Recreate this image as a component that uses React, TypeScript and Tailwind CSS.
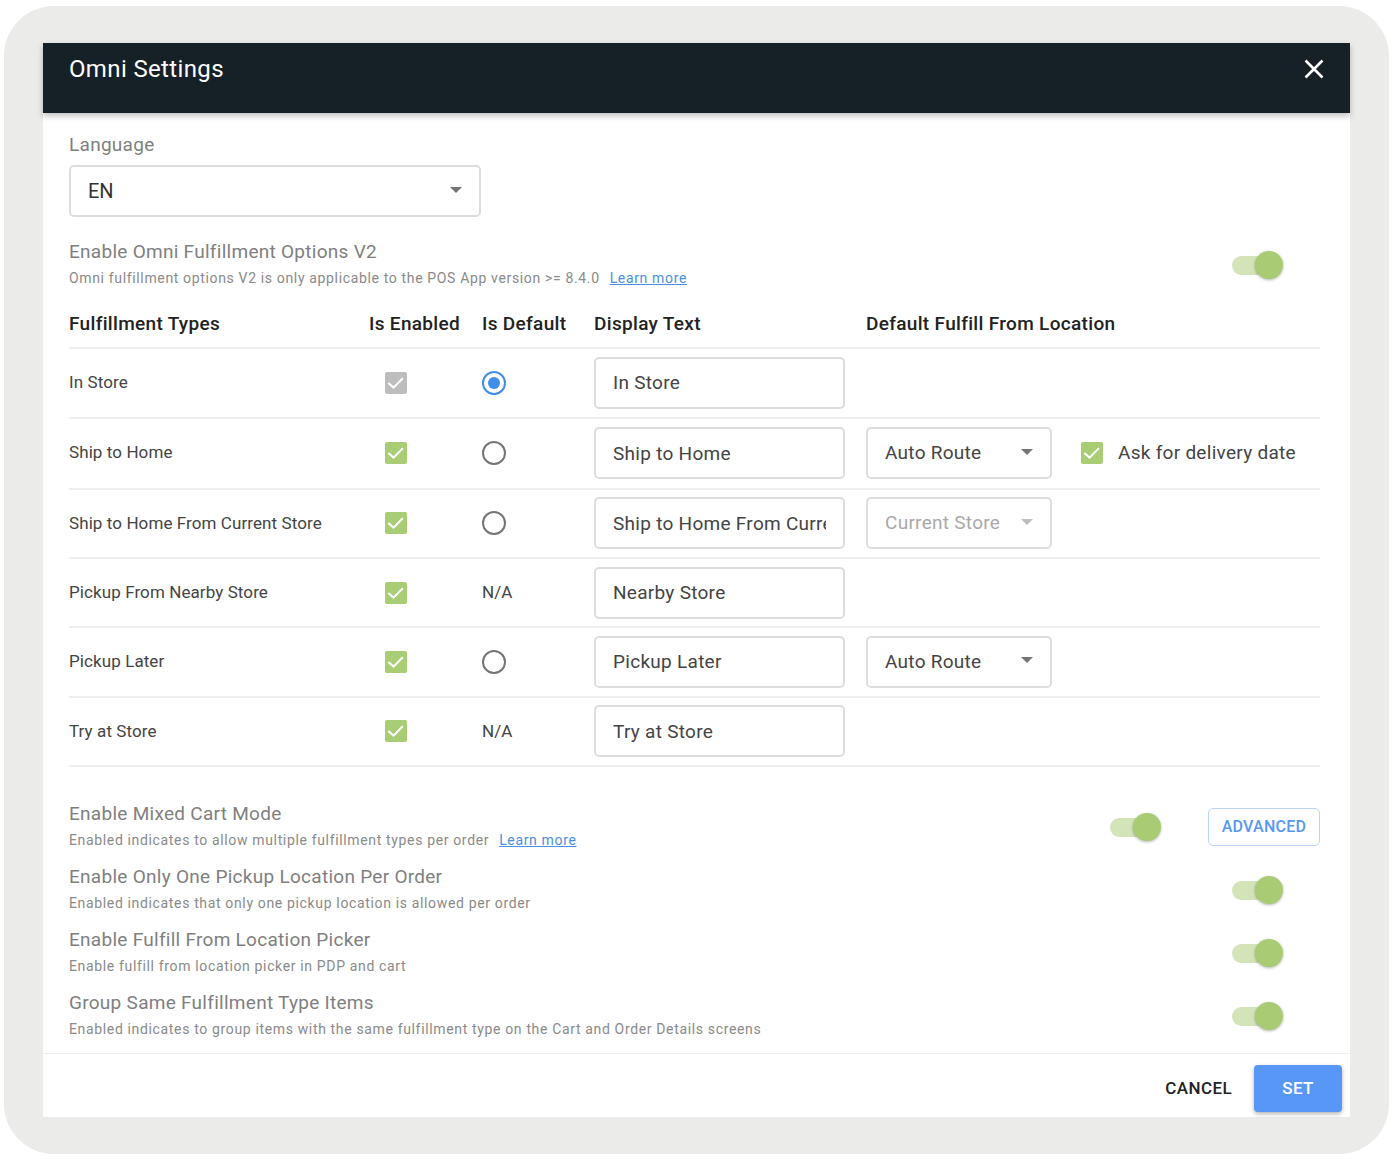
const Check = ({ gray }: { gray?: boolean }) => (
  <div className={`flex h-[22px] w-[22px] items-center justify-center rounded-[2px] ${gray ? "bg-[#bdbdbd]" : "bg-[#a8cd74]"}`}>
    <svg viewBox="0 0 22 22" className="h-[22px] w-[22px]" fill="none" stroke="#fff" strokeWidth="2">
      <path d="M3.3 11 L8.5 15.6 L17.8 6.2" />
    </svg>
  </div>
);

const Radio = ({ on }: { on?: boolean }) => (
  <div className={`flex h-[24px] w-[24px] items-center justify-center rounded-full border-[2.5px] ${on ? "border-[#3f8fe8]" : "border-[#757575]"}`}>
    {on && <div className="h-[12px] w-[12px] rounded-full bg-[#3f8fe8]" />}
  </div>
);

const Caret = ({ light }: { light?: boolean }) => (
  <svg viewBox="0 0 12 6" className="h-[6px] w-[12px]">
    <path d="M0 0 H12 L6 6 Z" fill={light ? "#bdbdbd" : "#757575"} />
  </svg>
);

const Toggle = () => (
  <div className="relative h-[28px] w-[51px] shrink-0">
    <div className="absolute left-0 top-[4.5px] h-[19px] w-[46px] rounded-full bg-[#d3e4b9]" />
    <div className="absolute right-0 top-0 h-[28px] w-[28px] rounded-full bg-[#a8cb74] shadow-[0_1px_3px_rgba(0,0,0,0.3)]" />
  </div>
);

const TextBox = ({ value }: { value: string }) => (
  <input
    readOnly
    value={value}
    className="h-[52px] w-[251px] rounded-[5px] border-2 border-[#dddddd] bg-white pl-[17px] pr-[17px] text-[19px] tracking-[0.28px] text-[#444444] outline-none"
  />
);

const Select = ({ value, disabled }: { value: string; disabled?: boolean }) => (
  <div className="flex h-[52px] w-[186px] items-center justify-between rounded-[5px] border-2 border-[#dddddd] bg-white pl-[17px] pr-[17px]">
    <span className={`text-[19px] tracking-[0.28px] ${disabled ? "text-[#a9a9a9]" : "text-[#444444]"}`}>{value}</span>
    <div className="-mt-[3px]">
      <Caret light={disabled} />
    </div>
  </div>
);

const Setting = ({ title, sub, link, children }: { title: string; sub: string; link?: boolean; children: React.ReactNode }) => (
  <div className="flex h-[63px] items-center justify-between">
    <div className="pb-[4px]">
      <div className="text-[19px] leading-[26px] tracking-[0.28px] text-[#7f7f7f]">{title}</div>
      <div className="mt-[3px] text-[14px] leading-[20px] tracking-[0.65px] text-[#8a8a8a]">
        {sub}
        {link && <span className="ml-[10px] text-[#4a90e2] underline">Learn more</span>}
      </div>
    </div>
    {children}
  </div>
);

const rows = [
  { name: "In Store", h: "h-[70px]", gray: true, radio: "on", text: "In Store" },
  { name: "Ship to Home", h: "h-[71px]", radio: "off", text: "Ship to Home", select: "Auto Route", ask: true },
  { name: "Ship to Home From Current Store", h: "h-[69.5px]", radio: "off", text: "Ship to Home From Current Store", select: "Current Store", disabled: true },
  { name: "Pickup From Nearby Store", h: "h-[69px]", radio: "na", text: "Nearby Store" },
  { name: "Pickup Later", h: "h-[69.5px]", radio: "off", text: "Pickup Later", select: "Auto Route" },
  { name: "Try at Store", h: "h-[69.5px]", radio: "na", text: "Try at Store" },
];

const grid = "grid grid-cols-[300px_113px_112px_272px_1fr] items-center";

export default function App() {
  return (
    <div className="bg-white px-[4px] pb-[10px] pt-[6px] font-['Roboto',sans-serif]">
      <div className="h-[1148px] w-[1385px] rounded-[50px] bg-[#ebebe9] pl-[39px] pr-[39px] pt-[37px]">
        <div className="flex h-[1074px] w-[1307px] flex-col bg-white">
          <header className="relative z-10 flex h-[70px] shrink-0 items-start justify-between bg-[#162127] pl-[26px] pr-[26px] pt-[11px] shadow-[0_3px_6px_rgba(0,0,0,0.25)]">
            <h1 className="text-[24px] font-normal leading-[30px] tracking-[0.36px] text-white">Omni Settings</h1>
            <svg viewBox="0 0 20 20" className="mt-[5px] h-[20px] w-[20px]" fill="none" stroke="#fff" strokeWidth="2.6">
              <path d="M1.5 1.5 L18.5 18.5 M18.5 1.5 L1.5 18.5" />
            </svg>
          </header>

          <main className="flex-1 pl-[26px] pr-[30px]">
            <div className="mt-[19px] text-[19px] leading-[26px] tracking-[0.28px] text-[#7f7f7f]">Language</div>
            <div className="mt-[7px] flex h-[52px] w-[412px] items-center justify-between rounded-[5px] border-2 border-[#dddddd] pl-[17px] pr-[17px]">
              <span className="text-[20px] text-[#333333]">EN</span>
              <div className="-mt-[2px]">
                <Caret />
              </div>
            </div>

            <div className="mt-[16.5px] flex h-[63px] items-center justify-between pr-[37px]">
              <div className="pb-[4px]">
                <div className="text-[19px] leading-[26px] tracking-[0.28px] text-[#7f7f7f]">Enable Omni Fulfillment Options V2</div>
                <div className="mt-[3px] text-[14px] leading-[20px] tracking-[0.65px] text-[#8a8a8a]">
                  Omni fulfillment options V2 is only applicable to the POS App version &gt;= 8.4.0
                  <span className="ml-[10px] text-[#4a90e2] underline">Learn more</span>
                </div>
              </div>
              <Toggle />
            </div>

            <div className={`${grid} mt-[7px] h-[45px] border-b-2 border-[#eeeeee] pb-[2px] text-[19px] font-medium tracking-[0.32px] text-[#222222]`}>
              <div>Fulfillment Types</div>
              <div>Is Enabled</div>
              <div>Is Default</div>
              <div>Display Text</div>
              <div>Default Fulfill From Location</div>
            </div>

            {rows.map((r) => (
              <div key={r.name} className={`${grid} ${r.h} border-b-2 border-[#eeeeee]`}>
                <div className="text-[17px] tracking-[0.09px] text-[#444444]">{r.name}</div>
                <div className="pl-[16px]">
                  <Check gray={r.gray} />
                </div>
                <div>
                  {r.radio === "na" ? (
                    <span className="text-[17px] text-[#444444]">N/A</span>
                  ) : (
                    <Radio on={r.radio === "on"} />
                  )}
                </div>
                <div>
                  <TextBox value={r.text} />
                </div>
                <div className="flex items-center">
                  {r.select && <Select value={r.select} disabled={r.disabled} />}
                  {r.ask && (
                    <div className="ml-[29px] flex items-center gap-[15px]">
                      <Check />
                      <span className="text-[19px] tracking-[0.28px] text-[#444444]">Ask for delivery date</span>
                    </div>
                  )}
                </div>
              </div>
            ))}

            <div className="mt-[28.5px] flex flex-col">
              <Setting title="Enable Mixed Cart Mode" sub="Enabled indicates to allow multiple fulfillment types per order" link>
                <div className="flex items-center gap-[47px]">
                  <Toggle />
                  <div className="flex h-[38px] w-[112px] items-center justify-center rounded-[5px] border-[1.5px] border-[#bcd6fa] text-[16px] font-medium tracking-[0.25px] text-[#5897f5]">
                    ADVANCED
                  </div>
                </div>
              </Setting>
              <Setting title="Enable Only One Pickup Location Per Order" sub="Enabled indicates that only one pickup location is allowed per order">
                <div className="pr-[37px]"><Toggle /></div>
              </Setting>
              <Setting title="Enable Fulfill From Location Picker" sub="Enable fulfill from location picker in PDP and cart">
                <div className="pr-[37px]"><Toggle /></div>
              </Setting>
              <Setting title="Group Same Fulfillment Type Items" sub="Enabled indicates to group items with the same fulfillment type on the Cart and Order Details screens">
                <div className="pr-[37px]"><Toggle /></div>
              </Setting>
            </div>
          </main>

          <footer className="flex h-[64px] shrink-0 items-start justify-end gap-[22px] border-t border-[#f0f0f0] pr-[8px] pt-[11px]">
            <button className="mt-[11px] text-[17px] font-medium tracking-[0.4px] text-[#222222]">CANCEL</button>
            <button className="h-[47px] w-[88px] rounded-[4px] bg-[#5897f5] text-[17px] font-medium tracking-[0.4px] text-white shadow-[0_2px_4px_rgba(0,0,0,0.3)]">SET</button>
          </footer>
        </div>
      </div>
    </div>
  );
}
